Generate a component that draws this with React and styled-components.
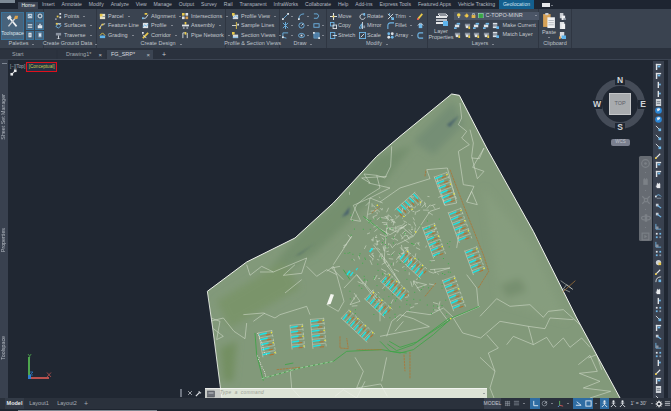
import React from 'react';
import styled, { createGlobalStyle } from 'styled-components';

const Global = createGlobalStyle`
  html, body { margin: 0; padding: 0; overflow: hidden; background: #202732; }
  body { font-family: "Liberation Sans", Arial, sans-serif; }
`;

const Shell = styled.div`
  width: 671px; height: 411px; display: flex; flex-direction: column; overflow: hidden;
  font-size: 5.5px; line-height: 1; color: #c6cad0; background: #202732;
`;

/* ---------- menu tabs ---------- */
const MenuBar = styled.div`
  height: 9px; flex: none; display: flex; align-items: stretch; background: #1e2531; position: relative; font-size: 5.1px;
`;
const AppCorner = styled.div`
  width: 15px; height: 3px; margin-right: 3px; flex: none; background: #7d8a96;
`;
const MenuTab = styled.div`
  padding: 0 3.45px; display: flex; align-items: center; white-space: nowrap;
  margin-top: ${p => (p.$active ? 2 : 0)}px;
  background: ${p => (p.$active ? '#3b4453' : p.$hl ? '#135f8e' : 'transparent')};
  color: ${p => (p.$active ? '#eef0f2' : p.$hl ? '#cfe4f2' : '#b4bac2')};
  margin-left: ${p => p.$ml || 0}px;
`;
const WindowChip = styled.div`
  width: 8px; height: 4px; margin: 3px 1px 0 8px; background: #e6e8ea; flex: none;
`;
const MenuCaret = styled.span`
  width: 0; height: 0; margin-top: 4.5px; border-left: 1.2px solid transparent; border-right: 1.2px solid transparent; border-top: 1.5px solid #c6cad0;
`;

/* ---------- ribbon ---------- */
const Ribbon = styled.div`
  height: 39px; flex: none; display: flex; background: #3a4350;
`;
const Panel = styled.div`
  width: ${p => p.$w}px; flex: none; display: flex; flex-direction: column;
  border-right: 1px solid #2f3642; box-sizing: border-box;
`;
const PanelBody = styled.div`
  height: 31px; display: flex; padding: 2.5px 0 0 ${p => p.$pl || 0}px; box-sizing: border-box;
`;
const PanelTitle = styled.div`
  height: 8px; display: flex; align-items: center; justify-content: center; gap: 3px;
  color: #bcc1c8; white-space: nowrap;
`;
const ToolColumn = styled.div`
  width: ${p => p.$w}px; flex: none; display: flex; flex-direction: column;
`;
const ToolItem = styled.div`
  height: 9.5px; display: flex; align-items: center; gap: ${p => p.$gap ?? 2}px; white-space: nowrap; color: #c4c8ce;
`;
const Caret = styled.span`
  width: 0; height: 0; flex: none; margin-left: ${p => p.$ml ?? 2}px;
  border-left: 1.2px solid transparent; border-right: 1.2px solid transparent; border-top: 1.5px solid #c6cad0;
`;
const IconSvg = styled.svg`
  width: ${p => p.$s || 7}px; height: ${p => p.$s || 7}px; flex: none; display: block;
`;
const ToolspaceBlock = styled.div`
  display: flex; gap: 1px; padding: 0 0 0 1px;
`;
const ToolspaceButton = styled.div`
  width: 23px; height: 28px; box-sizing: border-box; border: 1px solid #3a7299; background: #47637c;
  display: flex; flex-direction: column; align-items: center; justify-content: flex-start; padding-top: 2px; gap: 3px;
  color: #dde4ea; font-size: 5px;
`;
const PaletteGrid = styled.div`
  display: grid; grid-template-columns: 8px 9px; grid-template-rows: repeat(3, 9px); gap: .5px 1px; margin-left: 1px;
`;
const PaletteButton = styled.div`
  background: #47637c; border: .5px solid #3a7299; display: flex; align-items: center; justify-content: center;
`;
const BigTool = styled.div`
  width: ${p => p.$w}px; flex: none; display: flex; flex-direction: column; align-items: center; gap: 1.5px;
  line-height: 6px; text-align: center; color: #c4c8ce; padding-top: 1px;
`;
const DrawGrid = styled.div`
  display: grid; grid-template-columns: 15.5px 15.5px 15px; grid-auto-rows: 9.5px;
`;
const DrawCell = styled.div`
  display: flex; align-items: center; padding-left: 2px;
`;
const LayerStack = styled.div`
  width: 85px; flex: none; display: flex; flex-direction: column;
`;
const LayerCombo = styled.div`
  height: 8px; box-sizing: border-box; display: flex; align-items: center; gap: 2px; padding: 0 2px; margin-bottom: 1px;
  background: #4b5566; color: #d5d8dc;
`;
const ComboCaret = styled(Caret)`
  margin-left: auto;
`;
const LayerRow = styled.div`
  height: 9.5px; display: flex; align-items: center; gap: 2.5px; color: #c4c8ce; white-space: nowrap;
`;
const LayerLabel = styled.span`
  margin-left: 1px;
`;

/* ---------- file tabs ---------- */
const TabStrip = styled.div`
  height: 12px; flex: none; box-sizing: border-box; padding-top: 2px; display: flex; gap: 2px; align-items: stretch;
  background: #2a313d; border-bottom: 1px solid #3c4452;
`;
const FileTab = styled.div`
  width: ${p => p.$w}px; box-sizing: border-box; padding: 0 3px 0 ${p => p.$pl}px; display: flex; align-items: center;
  justify-content: space-between; color: ${p => (p.$active ? '#d8dbdf' : '#a2a8b0')};
  background: ${p => (p.$active ? '#3b4452' : '#2c333f')};
`;
const TabClose = styled.span`
  color: #c0c4ca; font-size: 6px;
`;
const TabPlus = styled.div`
  width: 10px; margin-left: 4px; display: flex; align-items: center; justify-content: center; color: #c8ccd2; font-size: 7px;
`;

/* ---------- workspace ---------- */
const Workspace = styled.div`
  height: 338px; flex: none; display: flex;
`;
const LeftStrip = styled.div`
  width: 8px; flex: none; background: #39414f; position: relative; display: flex; flex-direction: column; align-items: center;
`;
const StripGrip = styled.div`
  width: 5px; height: 1px; background: #7f8794; margin: 3px 0 ${p => p.$after}px;
`;
const StripLabel = styled.div`
  writing-mode: vertical-rl; transform: rotate(180deg); white-space: nowrap; color: #b3b9c1; font-size: 5.3px;
  margin-bottom: ${p => p.$after}px;
`;
const Canvas = styled.div`
  width: 645px; flex: none; position: relative; background: #202732;
`;
const Drawing = styled.svg`
  position: absolute; inset: 0; width: 645px; height: 338px; display: block;
`;
const ViewportLabel = styled.div`
  position: absolute; left: 2px; top: 2px; display: flex; align-items: center; gap: 1px; color: #aeb4bb; font-size: 4.6px;
`;
const VisualStyle = styled.span`
  border: 1px solid #e0101c; padding: 1.5px 1.5px; color: #c9c94a; background: #243246; width: 26px; box-sizing: content-box; white-space: nowrap;
`;
const ExpandIcon = styled.div`
  position: absolute; left: 2px; top: 9px;
`;
const Compass = styled.div`
  position: absolute; left: 579px; top: 16px; width: 66px; height: 56px;
`;
const CompassRing = styled.div`
  position: absolute; left: 8px; top: 3px; width: 50px; height: 50px; box-sizing: border-box;
  border: 7px solid #454c58; border-radius: 50%;
`;
const CubeFace = styled.div`
  position: absolute; left: 22px; top: 17px; width: 22px; height: 22px; box-sizing: border-box;
  background: #a8abae; border: 1.5px solid #c4c6c8; color: #5c6068; font-size: 5.5px;
  display: flex; align-items: center; justify-content: center;
`;
const CompassLetter = styled.span`
  position: absolute; left: ${p => p.$x}px; top: ${p => p.$y}px; width: 10px; text-align: center;
  color: #d0d3d6; font-size: 8.5px; font-weight: 700; background: #202732; line-height: 9px;
`;
const WcsChip = styled.div`
  position: absolute; left: 603px; top: 79px; width: 19px; height: 7px; border-radius: 2px; background: #7a7f8e;
  color: #bfc3cc; font-size: 4.5px; display: flex; align-items: center; justify-content: center;
`;
const NavBar = styled.div`
  position: absolute; left: 631px; top: 96px; width: 13px; height: 85px; border-radius: 1.5px; background: #666b72;
  display: flex; flex-direction: column; align-items: center; padding-top: 3px; box-sizing: border-box; gap: 3px;
`;
const NavDivider = styled.div`
  width: 1.5px; height: 1.5px; background: #7a7f86; margin: 1px 0;
`;
const CommandWrap = styled.div`
  position: absolute; left: 172px; bottom: 0; display: flex; align-items: center; height: 10px;
`;
const CommandGrip = styled.div`
  width: 2px; height: 8px; background: #6d7480; margin-right: 3px;
`;
const CommandTool = styled.div`
  width: ${p => p.$w}px; display: flex; align-items: center; justify-content: center; color: #c8ccd2;
`;
const CommandBox = styled.div`
  width: 282px; height: 10px; margin-left: 2px; box-sizing: border-box; display: flex; align-items: center; gap: 1px; padding: 0 2px;
  background: rgba(243, 245, 238, .8); border-top: 1px solid rgba(255,255,255,.6);
`;
const CommandPrompt = styled.span`
  font-style: italic; font-size: 4.8px; color: #9aa094; letter-spacing: .3px; word-spacing: 1.5px; margin-left: 1px;
`;
const CommandEnd = styled(Caret)`
  margin-left: auto; transform: rotate(180deg); border-top-color: #59606a;
`;
const RightDock = styled.div`
  width: 18px; flex: none; display: flex; background: #202732;
`;
const DockBar = styled.div`
  width: 11px; margin-top: 1px; background: #39414f; display: flex; flex-direction: column; align-items: center; padding-top: 1px;
`;
const DockGap = styled.div`
  width: 4px;
`;
const DockEdge = styled.div`
  width: 3px; background: #343c4a;
`;
const DockSep = styled.div`
  width: 8px; height: 1px; background: #8a919c; margin: 1.5px 0;
`;
const DockSlot = styled.div`
  height: 8.9px; flex: none; display: flex; align-items: center; justify-content: center;
`;

/* ---------- status ---------- */
const StatusBar = styled.div`
  height: 11px; flex: none; display: flex; background: #2a313c; align-items: stretch;
`;
const LayoutTabs = styled.div`
  display: flex; padding-left: 5px; gap: 2px;
`;
const LayoutTab = styled.div`
  width: ${p => p.$w}px; display: flex; align-items: center; justify-content: center;
  color: ${p => (p.$active ? '#e6e8ea' : '#a8aeb6')}; font-weight: ${p => (p.$active ? 700 : 400)};
  background: ${p => (p.$active ? '#333b47' : 'transparent')}; font-size: ${p => p.$fs || 5.5}px;
`;
const StatusTools = styled.div`
  margin-left: auto; display: flex; align-items: stretch;
`;
const StatusCell = styled.div`
  width: ${p => p.$w}px; flex: none; display: flex; align-items: center; justify-content: center;
  background: ${p => (p.$on ? '#2f6da3' : p.$chip ? '#3a4250' : 'transparent')};
  color: #c2c7ce; font-size: 5px; white-space: nowrap;
`;
const ScrollBand = styled.div`
  height: 2px; flex: 1; background: #1e2530; padding-left: 18px;
`;
const ScrollThumb = styled.div`
  width: 139px; height: 1.5px; margin-top: 1px; background: #7f8690;
`;

/* ---------- icons ---------- */
const W = '#dfe3e7', Y = '#e8c84a', B = '#5fb4ec', C = '#6fb7e8', O = '#d39a4a', D = '#8a93a0';
const line = (d, c = W, w = 1) => <path d={d} fill="none" stroke={c} strokeWidth={w} />;
const rect = (x, y, w, h, c = W) => <rect x={x} y={y} width={w} height={h} fill={c} />;

const shapes = {
  points: <>{rect(5, 0, 2, 2, W)}{rect(2, 3, 2, 2, Y)}{rect(5, 4, 2, 2, W)}{rect(0, 6, 2, 2, D)}</>,
  surface: <>{line('M1 5 L4 2 L7 4 L4 7 Z', C)}{line('M1 2 L7 2', W)}{rect(1, 1, 2, 2, Y)}</>,
  traverse: <>{rect(1, 1, 6, 3, D)}{line('M4 4 V8 M2 8 H6', W)}</>,
  parcel: <>{rect(1, 1, 6, 6, '#e6e2c8')}{rect(1, 1, 3, 3, Y)}{line('M4 4 H7', D)}</>,
  feature: <>{line('M1 7 L3 3 L7 2', W)}{rect(0, 6, 2, 2, Y)}{rect(3, 2, 2, 2, Y)}</>,
  grading: <>{rect(1, 4, 6, 3, B)}{line('M1 4 L4 1 L7 4', Y)}</>,
  align: <>{line('M0 6 H4 L7 2', W)}{rect(3, 0, 3, 2, Y)}{rect(0, 5, 2, 2, C)}</>,
  profile: <>{rect(1, 1, 6, 6, '#dfe3e7')}{line('M1 6 L3 3 L5 5 L7 2', C)}</>,
  corridor: <>{line('M1 7 L7 1', Y, 2)}{line('M1 3 L5 7', W)}{rect(0, 0, 2, 2, W)}</>,
  inter: <>{rect(0, 0, 3, 3, Y)}{rect(4, 0, 3, 3, W)}{rect(0, 4, 3, 3, W)}{rect(4, 4, 3, 3, O)}</>,
  assembly: <>{rect(3, 0, 2, 3, Y)}{rect(0, 3, 8, 2, W)}{rect(1, 5, 2, 3, D)}{rect(5, 5, 2, 3, D)}</>,
  pipe: <>{line('M1 1 V7 M1 1 H4 M6 1 V7', W)}{rect(3, 0, 2, 3, Y)}</>,
  pview: <>{rect(1, 2, 6, 5, '#d7dade')}{line('M1 6 L4 3 L7 5', C)}{rect(0, 0, 3, 3, Y)}</>,
  sample: <>{line('M0 4 H5', W)}{line('M5 0 V8', Y)}{rect(6, 2, 2, 2, W)}</>,
  section: <>{rect(1, 3, 6, 4, '#d7dade')}{rect(0, 0, 3, 3, Y)}{line('M1 6 H7', C)}</>,
  dline: <>{line('M1 7 L7 1', C)}{rect(0, 6, 2, 2, W)}{rect(6, 0, 2, 2, W)}</>,
  darc: <>{line('M1 7 Q1 1 7 1', C)}{rect(0, 6, 2, 2, W)}</>,
  dcurve: <>{line('M1 1 H5 Q8 3 5 6 H1', C)}</>,
  dstar: <>{line('M1 1 L7 7 M7 1 L1 7 M4 0 V8', C)}</>,
  dcircle: <><circle cx="4" cy="4" r="3" fill="none" stroke={C} strokeWidth="1" />{line('M4 4 L6 2', W)}</>,
  drect: <rect x="1" y="2" width="6" height="4" fill="none" stroke={C} strokeWidth="1" />,
  dpoly: <>{line('M1 1 H7 M1 1 V6 L5 7', C)}{rect(0, 5, 2, 2, W)}</>,
  dgear: <><ellipse cx="4" cy="4" rx="3.4" ry="2.4" fill="none" stroke={C} strokeWidth="1" />{rect(3, 3, 2, 2, W)}</>,
  dhatch: <><rect x="1" y="1" width="6" height="6" fill="#4f7ea6" stroke={C} strokeWidth=".6" />{rect(0, 0, 2, 2, W)}{rect(6, 6, 2, 2, W)}</>,
  move: <>{line('M4 0 V8 M0 4 H8', W, 1.2)}{rect(3, 3, 2, 2, Y)}</>,
  copy: <><rect x="0.5" y="0.5" width="4" height="4" fill="none" stroke={C} strokeWidth="1" /><rect x="3.5" y="3.5" width="4" height="4" fill="none" stroke={W} strokeWidth="1" /></>,
  stretch: <><rect x="0.5" y="0.5" width="5" height="7" fill="none" stroke={C} strokeWidth="1" />{line('M3 4 H8', W)}</>,
  rotate: <>{line('M6.5 2.5 A3 3 0 1 0 7 5', W)}{rect(5, 0, 2, 3, C)}</>,
  mirror: <>{line('M4 0 V8', W)}{line('M0 7 L3 2 V7 Z', C)}{rect(5, 4, 2, 3, D)}</>,
  scale: <><rect x="0.5" y="0.5" width="7" height="7" fill="none" stroke={C} strokeWidth="1" />{line('M2 6 L6 2', W)}</>,
  trim: <>{line('M1 1 L7 7 M7 1 L1 7', W)}{line('M3 0 V3', C)}{rect(5, 5, 3, 3, C)}</>,
  fillet: line('M1 8 V4 Q1 1 4 1 H8', C, 1.2),
  array: <><circle cx="2" cy="2" r="1.6" fill={C} /><circle cx="6" cy="2" r="1.6" fill={W} /><circle cx="2" cy="6" r="1.6" fill={W} /><circle cx="6" cy="6" r="1.6" fill={C} /></>,
  erase: <>{line('M1 7 L6 1', Y, 2)}{rect(0, 6, 2, 2, '#e25555')}</>,
  explode: <>{rect(2, 2, 4, 5, C)}{line('M1 4 L4 1 L7 4', W)}</>,
  offset: line('M7 1 H3 Q1 1 1 4 Q1 7 3 7 H7', C, 1.3),
  bulbOn: <><circle cx="4" cy="3" r="2.6" fill="#f0d24e" />{rect(3, 5, 2, 3, '#c9cbc5')}</>,
  sun: <><circle cx="4" cy="4" r="2.5" fill="#f0c84a" />{line('M4 0 V1 M4 7 V8 M0 4 H1 M7 4 H8', '#f0c84a')}</>,
  lock: <>{rect(1, 3, 6, 5, '#e0b44c')}{line('M2.5 3 V1 H5.5 V3', W)}</>,
  swatch: <rect x="0.5" y="0.5" width="7" height="7" fill="#3aa646" stroke="#cfe" strokeWidth=".6" />,
  layA: <>{rect(1, 3, 5, 3, W)}{rect(3, 1, 4, 2, C)}{rect(0, 6, 3, 2, C)}</>,
  layB: <>{rect(1, 2, 6, 3, D)}{rect(2, 4, 3, 3, W)}{rect(5, 5, 2, 3, Y)}</>,
  big: <>{rect(1, 1, 5, 2, W)}{rect(1, 3, 5, 2, D)}{rect(1, 5, 5, 2, W)}{rect(5, 5, 3, 3, B)}</>,
  layerBig: <>{line('M4 1 L12 1 L14 3 L6 3 Z', W)}{rect(2, 3, 11, 2, '#e4e6e8')}{rect(2, 6, 11, 2, '#b8bdc4')}{rect(2, 9, 11, 2, '#e4e6e8')}{rect(9, 8, 5, 5, B)}</>,
  paste: <>{rect(0, 1, 7, 12, '#d6a258')}{rect(2, 0, 3, 2, '#c9cdd2')}{rect(4, 4, 7, 10, '#eff1f3')}{line('M5 7 H10 M5 9 H10 M5 11 H10', '#9aa0a8', .6)}</>,
  cut: <>{rect(1, 0, 4, 6, '#c9cdd2')}{rect(3, 3, 4, 5, '#eef0f2')}{rect(5, 6, 3, 2, D)}</>,
  pasteS: <>{rect(1, 0, 5, 8, '#dfe2e5')}{rect(3, 2, 4, 6, '#f2f3f4')}</>,
  matchP: <>{rect(1, 0, 5, 7, '#d9dce0')}{rect(3, 4, 5, 4, B)}{rect(0, 5, 2, 3, O)}</>,
  pal1: <>{rect(1, 1, 6, 6, '#bed0de')}{line('M2 5 L4 3 L6 4', '#3c6f9a')}</>,
  pal2: <circle cx="4" cy="4" r="2.6" fill="none" stroke="#dfe8ef" strokeWidth="1.3" />,
  pal3: line('M1 2 H7 M1 4 H7 M1 6 H7', '#dfe8ef'),
  pal4: <>{rect(1, 3, 6, 4, '#dfe8ef')}{rect(3, 1, 2, 2, '#dfe8ef')}</>,
  pal5: <>{rect(2, 1, 4, 6, '#eef2f5')}{line('M3 3 H5 M3 5 H5', '#5a7a95')}</>,
  pal6: <>{rect(2, 1, 4, 6, '#a7c4dc')}{rect(3, 3, 2, 2, '#fff')}</>,
  dockFlag: <>{rect(1, 1, 6, 1.6, W)}{rect(1, 1, 1.6, 7, W)}{rect(3, 3, 3, 2, C)}</>,
  dockThin: <>{rect(3, 1, 1.6, 7, W)}{rect(4.6, 3, 2, 2, C)}</>,
  dockDoc: <>{rect(1, 0, 6, 8, '#cdd2d8')}{line('M2 3 H6 M2 5 H6', '#6f7884')}</>,
  globe: <><circle cx="4" cy="4" r="3.8" fill="#2a86d6" /><path d="M2 2 L5 1 L6 3 L3 5 Z" fill="#e8eef4" /></>,
  dockArrow: <>{line('M1 1 L6 6', W)}{rect(4, 4, 3, 3, C)}</>,
  dockHand: <>{rect(2, 2, 4, 5, '#e9ebee')}{line('M3 1 V3 M5 1 V3', W)}{rect(1, 4, 1, 2, W)}</>,
  dockUndo: <>{line('M1 4 Q4 0 7 4', C)}{line('M2 6 H7', D)}{rect(0, 3, 2, 2, W)}</>,
  dockBlue: <>{rect(1, 2, 3, 3, '#c6ccd4')}{line('M3 4 L7 7', C, 1.4)}</>,
  dockAxis: <>{line('M1 1 V7 H7', C)}{rect(1, 4, 3, 3, D)}</>,
  dockDots: <>{rect(1, 1, 2, 2, W)}{rect(5, 1, 2, 2, C)}{rect(1, 5, 2, 2, C)}{rect(5, 5, 2, 2, D)}</>,
  dockBall: <><circle cx="4" cy="4" r="3" fill="#cfd3d8" />{rect(4, 4, 3, 3, Y)}</>,
  dockPen: <>{line('M1 7 L6 2', W, 1.3)}{rect(0, 6, 2, 2, Y)}</>,
  dockCurve: <>{line('M1 7 Q1 1 7 1', W)}{rect(4, 4, 3, 3, C)}</>,
  wrench: <>{line('M1 7 L5 3', W, 1.4)}{line('M5 3 L4.5 1.2 M5 3 L7 3.5', W, 1.2)}</>,
  close: line('M1.5 1.5 L6.5 6.5 M6.5 1.5 L1.5 6.5', '#c8ccd2', 1),
  grid: line('M1 2 H7 M1 4 H7 M1 6 H7 M2 1 V7 M4 1 V7 M6 1 V7', '#8a929d', .7),
  snap: line('M1 1.5 H7 M1 3.5 H7 M1 5.5 H7', '#8a929d', .8),
  ortho: line('M2 1 V6.5 H7', '#e6f0f8', 1),
  polar: <><circle cx="4" cy="4" r="2.7" fill="none" stroke="#8a929d" strokeWidth=".9" />{line('M4 4 L7 2', '#bcc2ca')}</>,
  xyz: <>{line('M3 1 V6', '#5cba5e')}{line('M3 6 L7 7', '#d85a5a')}{line('M3 6 L1 8', '#5aa0e0')}</>,
  dyn: line('M1 6 H7 L2 2', '#e6f0f8'),
  win: <rect x="1" y="1" width="6" height="6" fill="none" stroke="#e6f0f8" strokeWidth="1" />,
  man: <><circle cx="4" cy="1.6" r="1.2" fill="#e4e8ec" />{line('M4 3 V5 L1 8 M4 5 L7 8 M2 3.5 H6', '#e4e8ec', 1)}</>,
  gear: <><circle cx="4" cy="4" r="2" fill="none" stroke="#e4e6e8" strokeWidth="1.3" />{line('M4 0.5 V2 M4 6 V7.5 M0.5 4 H2 M6 4 H7.5 M1.6 1.6 L2.6 2.6 M5.4 5.4 L6.4 6.4 M6.4 1.6 L5.4 2.6 M2.6 5.4 L1.6 6.4', '#e4e6e8', .9)}</>,
  menu: line('M1 2 H7 M1 4 H7 M1 6 H7', '#c8ccd2', .9),
  expand: <>{line('M2 6 L6 2', '#e8eaec', 1.2)}{rect(4.5, .5, 3, 3, '#e8eaec')}{rect(.5, 4.5, 3, 3, '#e8eaec')}</>,
  navWheel: <><circle cx="4" cy="4" r="3.4" fill="none" stroke="#7c8187" strokeWidth="1" /><circle cx="4" cy="4" r="1.2" fill="#7c8187" /></>,
  navHand: <>{rect(2, 2, 4, 5, '#7c8187')}{line('M3 1 V3 M5 1 V3', '#7c8187')}</>,
  navZoom: <>{line('M1 1 L7 7 M7 1 L1 7', '#7c8187', 1)}<circle cx="4" cy="4" r="1.4" fill="#666b72" stroke="#7c8187" /></>,
  navOrbit: <><ellipse cx="4" cy="4" rx="3.6" ry="1.6" fill="none" stroke="#7c8187" />{rect(3, 1, 2, 6, '#7c8187')}</>,
  navPlay: <><rect x="1" y="1" width="6" height="6" fill="none" stroke="#7c8187" /><path d="M3 2.5 L5.5 4 L3 5.5 Z" fill="#7c8187" /></>,
  cmd: <><rect x="0.5" y="1" width="7" height="6" fill="#6c7078" stroke="#454a52" strokeWidth=".5" />{line('M1.5 3 H6.5', '#d8dade', .8)}</>,
};

const Ic = ({ n, s }) => <IconSvg viewBox="0 0 8 8" $s={s}>{shapes[n]}</IconSvg>;
const IcWide = ({ n, w, h, vb }) => <svg width={w} height={h} viewBox={vb}>{shapes[n]}</svg>;

const Tool = ({ icon, label, caret, gap }) => (
  <ToolItem $gap={gap}>
    <Ic n={icon} />
    <span>{label}</span>
    {caret && <Caret />}
  </ToolItem>
);

const menu = ['Insert', 'Annotate', 'Modify', 'Analyze', 'View', 'Manage', 'Output', 'Survey', 'Rail', 'Transparent', 'InfraWorks', 'Collaborate', 'Help', 'Add-ins', 'Express Tools', 'Featured Apps', 'Vehicle Tracking'];

const draw = [
  ['dline', true], ['darc', true], ['dcurve', false],
  ['dstar', true], ['dcircle', true], ['drect', true],
  ['dpoly', true], ['dgear', true], ['dhatch', true],
];

const dock = [
  'dockFlag', 'dockFlag', 'dockThin', 'dockThin', 'dockDoc', 'globe', 'globe', 'dockArrow', 'dockArrow', 'dockArrow', 'dockPen', 'dockFlag', 'dockFlag',
  '|', 'dockHand', '|', 'dockUndo', 'dockBlue', 'dockBlue', '|', 'dockAxis', 'dockDots', 'dockAxis', 'dockDots', 'dockBall', 'dockPen', 'dockCurve',
  '|', 'dockHand', 'dockThin', 'dockDots', 'dockArrow', 'dockFlag', 'dockBlue', 'dockAxis', 'dockDots', 'dockThin', 'dockPen', 'dockFlag', 'dockDoc', 'dockArrow', 'dockBlue',
];

/* ---------- the site drawing, in coordinates of the 3x crop ---------- */
const boundary = '22,610 140,522 285,450 400,345 530,205 600,145 755,18 778,22 860,180 1000,430 1130,690 1260,930 1260,960 70,960 60,890 38,720';

const white = [
  '780,45 785,90 775,110 800,130 785,150 808,170 775,190 790,290 822,295 800,342 832,350 815,310 800,340',
  '810,125 820,165 815,205 832,272 852,250 818,238 852,180 838,212 815,210',
  '575,175 572,235 555,270 530,262 492,258 510,285 485,270 560,265',
  '530,262 540,300 500,325 470,350 452,395 482,400 460,352 510,330 500,395 535,420 570,440 620,410 590,432 560,420 552,520 600,585',
  '540,342 600,300 690,272 680,245 742,240 770,345 735,352 710,268',
  '505,285 570,300 510,330 548,345',
  '760,690 788,735 842,750 900,700 985,715 1035,722 1050,690 1120,695',
  '840,685 890,632 930,655 990,650 1030,688 1045,670 1090,665 1118,690 1142,712',
  '860,740 895,780 865,795 885,850 870,900 882,930',
  '840,808 885,850',
  '985,715 1000,770 940,745 920,770',
  '1000,770 1040,748 1060,778 1090,750 1110,778 1145,750 1170,778',
  '1135,830 1170,802 1192,850 1138,856 1200,880 1150,900 1232,910 1170,930',
  '1165,810 1190,800 1205,845',
  '540,745 688,716 640,692 600,680 575,700 560,745',
  '30,700 70,690 102,730 135,752 140,705',
  '40,722 70,745 50,755 60,700 32,690',
  '140,530 150,562 185,535 220,552 180,552',
  '220,552 320,510 305,556 250,562 285,530',
  '320,535 350,565 380,545 410,560 400,535 380,550',
  '255,615 305,575',
  '410,560 432,640 415,670 380,650',
  '400,530 455,445 430,480',
  '432,600 470,560 530,640',
  '270,840 275,900 300,928',
  '465,808 490,850 470,900 542,888 562,925',
  '560,808 545,880',
  '405,925 430,905 470,930 495,880',
  '590,700 620,670 690,680 730,660 760,688',
  '610,700 585,730',
  '720,640 715,660 745,700',
  '430,575 395,540 420,535',
  '470,620 450,650 480,640 462,615',
  '130,680 190,675 225,690 240,680 320,655 330,680',
  '160,700 195,675',
  '660,610 640,580 680,590 650,600',
  '690,545 750,540 700,555',
  '560,420 610,420 640,445 590,470',
  '640,445 690,370 720,360',
  '520,470 560,520 600,585',
  '470,560 540,640 540,700',
  '800,560 830,600 835,655',
  '760,690 840,655',
  '780,420 770,480',
];

const orange = [
  '750,245 790,350 850,500 866,550 835,600',
  '420,745 420,780 445,782 440,750',
  '612,800 615,850',
  '630,792 630,872',
  '545,785 470,785',
  '230,845 300,838',
  '675,625 708,585',
  '675,265 678,245',
  '515,375 540,355',
];

const green = [
  '185,872 300,840 400,820 440,790 545,785 600,795 640,785 700,740 755,690 838,655',
  '562,768 590,788 640,770 690,735 750,696',
  '568,760 600,778 650,762 748,690',
  '165,735 170,800 190,878',
  '255,830 280,825',
  '490,385 560,440',
  '430,545 450,575',
  '540,760 570,790 620,795',
];

const blocks = [
  [737, 302, 40, 92, -20], [780, 412, 40, 98, -20], [825, 518, 38, 78, -20], [762, 616, 38, 100, -20],
  [702, 458, 38, 100, -20], [626, 352, 34, 82, 49], [640, 528, 34, 92, -47], [585, 597, 34, 88, -47],
  [535, 648, 34, 84, -47], [474, 714, 34, 108, -47], [355, 736, 40, 90, -5], [292, 746, 38, 74, -5], [202, 767, 40, 76, -10],
];

const Block = ({ x, y, w, l, a }) => {
  const n = Math.round(l / 16);
  return (
    <g transform={`translate(${x} ${y}) rotate(${a})`}>
      <line x1={-w / 2} x2={-w / 2} y1={-l / 2} y2={l / 2} stroke="#dfe5d8" strokeWidth="1.3" />
      <line x1={w / 2} x2={w / 2} y1={-l / 2} y2={l / 2} stroke="#dfe5d8" strokeWidth="1.3" strokeDasharray="8 5" />
      {Array.from({ length: n }, (_, i) => {
        const yy = -l / 2 + ((i + 0.5) * l) / n;
        return (
          <g key={i}>
            <line x1={-w / 2} x2={w / 2} y1={yy - 6} y2={yy - 6} stroke="#dfe5d8" strokeWidth="1.1" />
            <line x1={-w * 0.48} x2={w * 0.1} y1={yy} y2={yy - 1.5} stroke="#1de4e6" strokeWidth="4.2" />
            <line x1={w * 0.02} x2={w * 0.34} y1={yy + 4} y2={yy + 4} stroke="#b4702c" strokeWidth="3" />
            {i % 2 === 0 && <rect x={w * 0.4} y={yy - 2} width="4" height="4" fill="#f2e83a" />}
          </g>
        );
      })}
    </g>
  );
};

/* pseudo-random site clutter, fixed by the seed */
const rng = (() => { let s = 7919; return () => (s = (s * 16807) % 2147483647) / 2147483647; })();
const clutter = Array.from({ length: 190 }, (_, i) => {
  const tight = i % 2 === 0;
  const cx = tight ? 510 + rng() * 140 : 440 + rng() * 280;
  const cy = tight ? 350 + rng() * 170 : 320 + rng() * 350;
  const a = rng() * 6.28, r = 5 + rng() * 13;
  return [cx, cy, cx + Math.cos(a) * r, cy + Math.sin(a) * r];
});
const greenDots = Array.from({ length: 130 }, () => [430 + rng() * 320, 380 + rng() * 320]);
const roadDots = Array.from({ length: 26 }, (_, i) => [170 + (i % 13) * 2 + rng() * 4, 735 + i * 5.2]);

const Site = () => (
  <Drawing viewBox="8 60 645 338">
    <defs>
      <clipPath id="landClip"><polygon points={boundary} /></clipPath>
      <filter id="soft" x="-30%" y="-30%" width="160%" height="160%"><feGaussianBlur stdDeviation="11" /></filter>
      <filter id="softer" x="-30%" y="-30%" width="160%" height="160%"><feGaussianBlur stdDeviation="3" /></filter>
    </defs>
    <g transform="translate(200 88) scale(.33333)">
      <polygon points={boundary} fill="#82997a" />
      <g clipPath="url(#landClip)">
        <g filter="url(#soft)">
          <polygon points="285,450 400,345 530,205 640,170 500,350 340,500 180,580" fill="#748f6e" />
          <polygon points="50,640 250,520 300,600 90,720" fill="#7a946a" />
          <polygon points="60,780 110,760 100,880 70,880" fill="#738f62" />
          <polygon points="640,160 760,40 790,110 700,200" fill="#748e74" />
          <polygon points="850,300 1000,480 1100,700 900,640" fill="#869d7e" />
          <polygon points="900,590 960,570 980,610 920,630" fill="#778f6f" />
        </g>
        <g filter="url(#softer)">
          <polygon points="425,388 450,355 445,378" fill="#46606c" />
          <polygon points="740,110 778,82 750,118" fill="#50696c" />
          <polygon points="285,505 345,465 300,500" fill="#5a7468" />
        </g>
        <g fill="none" stroke="#dfe6d8" strokeWidth="1.7" opacity=".88">
          {white.map((p, i) => <polyline key={i} points={p} />)}
          {clutter.map((c, i) => <line key={i} x1={c[0]} y1={c[1]} x2={c[2]} y2={c[3]} />)}
        </g>
        <polygon points="380,650 392,618 402,620 392,648" fill="#f4f6f0" />
        <g fill="none" stroke="#3fa548" strokeWidth="2.6">
          {green.map((p, i) => <polyline key={i} points={p} />)}
        </g>
        <g fill="none" stroke="#b4702c" strokeWidth="2.2" strokeDasharray="7 2">
          {orange.map((p, i) => <polyline key={i} points={p} />)}
        </g>
        <polyline points="185,872 300,840 400,820" fill="none" stroke="#e3e8dc" strokeWidth="1.6" strokeDasharray="9 6" />
        {blocks.map((b, i) => <Block key={i} x={b[0]} y={b[1]} w={b[2]} l={b[3]} a={b[4]} />)}
        <g fill="#1de4e6">
          <rect x="438" y="552" width="16" height="5" transform="rotate(-55 446 555)" />
          <rect x="448" y="556" width="14" height="4" transform="rotate(-55 455 558)" />
          <rect x="506" y="484" width="14" height="5" transform="rotate(-50 513 486)" />
          <rect x="466" y="542" width="8" height="3" transform="rotate(-55 470 543)" />
        </g>
        <g fill="#3fae4a">{greenDots.map((d, i) => <rect key={i} x={d[0]} y={d[1]} width="3" height="3" />)}</g>
        <g fill="#e6ebdf">{roadDots.map((d, i) => <rect key={i} x={d[0]} y={d[1]} width="2.6" height="2.6" />)}</g>
        <g fill="#f2e83a">
          <rect x="750" y="690" width="4" height="4" /><rect x="645" y="430" width="4" height="4" /><rect x="530" y="350" width="4" height="4" />
        </g>
      </g>
      <polyline points={boundary.split(' ').slice(0, 12).join(' ')} fill="none" stroke="#f1f4ee" strokeWidth="3" />
      <polyline points="22,610 38,720 60,890 70,960" fill="none" stroke="#eef2ea" strokeWidth="2.6" />
      <g fill="none" stroke="#d9dfd2" strokeWidth="1.6">
        <polyline points="1082,578 1118,604 1100,590 1090,603 1110,612" />
      </g>
      <polyline points="1088,612 1126,578" fill="none" stroke="#b98138" strokeWidth="2" />
    </g>
    {/* UCS icon */}
    <g>
      <rect x="28" y="357" width="2" height="21" fill="#4ea64e" />
      <rect x="28" y="377" width="21" height="2" fill="#b9514e" />
      <rect x="28" y="375" width="3" height="4" fill="#2f7fd0" />
      <path d="M28 354 l1.6 2.2 l1.6 -2.2 M29.6 356.2 v2" fill="none" stroke="#4ea64e" strokeWidth=".8" />
      <path d="M47 372.5 l4 4.5 M51 372.5 l-4 4.5" fill="none" stroke="#b9514e" strokeWidth=".8" />
      <path d="M30 372 h3 l-3 3 h3" fill="none" stroke="#2f7fd0" strokeWidth=".7" />
    </g>
  </Drawing>
);

export default function App() {
  return (
    <Shell>
      <Global />
      <MenuBar>
        <AppCorner />
        <MenuTab $active>Home</MenuTab>
        {menu.map(m => <MenuTab key={m}>{m}</MenuTab>)}
        <MenuTab $hl $ml={1}>Geolocation</MenuTab>
        <WindowChip />
        <MenuCaret />
      </MenuBar>

      <Ribbon>
        <Panel $w={44}>
          <PanelBody>
            <ToolspaceBlock>
              <ToolspaceButton>
                <IconSvg viewBox="0 0 16 16" $s={13}>
                  <path d="M4 3 L13 14" stroke="#eef1f4" strokeWidth="2" fill="none" />
                  <path d="M12 3 L3 14" stroke="#c9ced4" strokeWidth="1.8" fill="none" />
                  <path d="M1 3 L5 0 L7 3 L3 6 Z" fill="#e8eaed" />
                  <path d="M15 1 L11 1 L10 5 L14 5 Z" fill="#dba24c" />
                </IconSvg>
                <span>Toolspace</span>
              </ToolspaceButton>
              <PaletteGrid>
                {['pal1', 'pal2', 'pal3', 'pal4', 'pal5', 'pal6'].map(p => <PaletteButton key={p}><Ic n={p} s={6} /></PaletteButton>)}
              </PaletteGrid>
            </ToolspaceBlock>
          </PanelBody>
          <PanelTitle>Palettes <Caret $ml={1} /></PanelTitle>
        </Panel>

        <Panel $w={53}>
          <PanelBody $pl={11}>
            <ToolColumn $w={40}>
              <Tool icon="points" label="Points" caret />
              <Tool icon="surface" label="Surfaces" caret />
              <Tool icon="traverse" label="Traverse" caret />
            </ToolColumn>
          </PanelBody>
          <PanelTitle>Create Ground Data <Caret $ml={0} /></PanelTitle>
        </Panel>

        <Panel $w={129}>
          <PanelBody $pl={2}>
            <ToolColumn $w={43}>
              <Tool icon="parcel" label="Parcel" caret />
              <Tool icon="feature" label="Feature Line" caret />
              <Tool icon="grading" label="Grading" caret />
            </ToolColumn>
            <ToolColumn $w={40}>
              <Tool icon="align" label="Alignment" caret />
              <Tool icon="profile" label="Profile" caret />
              <Tool icon="corridor" label="Corridor" caret />
            </ToolColumn>
            <ToolColumn $w={44}>
              <Tool icon="inter" label="Intersections" caret />
              <Tool icon="assembly" label="Assembly" caret />
              <Tool icon="pipe" label="Pipe Network" caret />
            </ToolColumn>
          </PanelBody>
          <PanelTitle>Create Design <Caret $ml={1} /></PanelTitle>
        </Panel>

        <Panel $w={54}>
          <PanelBody $pl={6}>
            <ToolColumn $w={48}>
              <Tool icon="pview" label="Profile View" caret />
              <Tool icon="sample" label="Sample Lines" />
              <Tool icon="section" label="Section Views" caret />
            </ToolColumn>
          </PanelBody>
          <PanelTitle>Profile &amp; Section Views</PanelTitle>
        </Panel>

        <Panel $w={47}>
          <PanelBody>
            <DrawGrid>
              {draw.map(([n, c]) => <DrawCell key={n}><Ic n={n} />{c && <Caret />}</DrawCell>)}
            </DrawGrid>
          </PanelBody>
          <PanelTitle>Draw <Caret $ml={1} /></PanelTitle>
        </Panel>

        <Panel $w={101}>
          <PanelBody $pl={3}>
            <ToolColumn $w={29}>
              <Tool icon="move" label="Move" gap={1} />
              <Tool icon="copy" label="Copy" gap={1} />
              <Tool icon="stretch" label="Stretch" gap={1} />
            </ToolColumn>
            <ToolColumn $w={28}>
              <Tool icon="rotate" label="Rotate" gap={1} />
              <Tool icon="mirror" label="Mirror" gap={1} />
              <Tool icon="scale" label="Scale" gap={1} />
            </ToolColumn>
            <ToolColumn $w={30}>
              <Tool icon="trim" label="Trim" caret gap={1} />
              <Tool icon="fillet" label="Fillet" caret gap={1} />
              <Tool icon="array" label="Array" caret gap={1} />
            </ToolColumn>
            <ToolColumn $w={9}>
              <ToolItem><Ic n="erase" /></ToolItem>
              <ToolItem><Ic n="explode" /></ToolItem>
              <ToolItem><Ic n="offset" /></ToolItem>
            </ToolColumn>
          </PanelBody>
          <PanelTitle>Modify <Caret $ml={1} /></PanelTitle>
        </Panel>

        <Panel $w={111}>
          <PanelBody>
            <BigTool $w={26}>
              <IcWide n="layerBig" w={15} h={14} vb="0 0 15 14" />
              <span>Layer<br />Properties</span>
            </BigTool>
            <LayerStack>
              <LayerCombo>
                <Ic n="bulbOn" s={5.5} /><Ic n="sun" s={5.5} /><Ic n="lock" s={5} /><Ic n="swatch" s={5.5} />
                <span>C-TOPO-MINR</span>
                <ComboCaret />
              </LayerCombo>
              <LayerRow>
                <Ic n="layA" /><Ic n="layB" /><Ic n="layA" /><Ic n="layA" /><Ic n="big" />
                <LayerLabel>Make Current</LayerLabel>
              </LayerRow>
              <LayerRow>
                <Ic n="layB" /><Ic n="layB" /><Ic n="layB" /><Ic n="layB" /><Ic n="big" />
                <LayerLabel>Match Layer</LayerLabel>
              </LayerRow>
            </LayerStack>
          </PanelBody>
          <PanelTitle>Layers <Caret $ml={1} /></PanelTitle>
        </Panel>

        <Panel $w={33}>
          <PanelBody>
            <BigTool $w={20}>
              <IcWide n="paste" w={12} h={15} vb="0 0 11 14" />
              <span>Paste</span>
              <Caret $ml={0} />
            </BigTool>
            <ToolColumn $w={10}>
              <ToolItem><Ic n="cut" /></ToolItem>
              <ToolItem><Ic n="pasteS" /></ToolItem>
              <ToolItem><Ic n="matchP" /></ToolItem>
            </ToolColumn>
          </PanelBody>
          <PanelTitle>Clipboard</PanelTitle>
        </Panel>
      </Ribbon>

      <TabStrip>
        <FileTab $w={56} $pl={12}><span>Start</span></FileTab>
        <FileTab $w={47} $pl={8}><span>Drawing1*</span><TabClose>×</TabClose></FileTab>
        <FileTab $w={46} $active $pl={4}><span>FG_SRP*</span><TabClose>×</TabClose></FileTab>
        <TabPlus>+</TabPlus>
      </TabStrip>

      <Workspace>
        <LeftStrip>
          <StripGrip $after={30} />
          <StripLabel $after={88}>Sheet Set Manager</StripLabel>
          <StripLabel $after={84}>Properties</StripLabel>
          <StripLabel $after={0}>Toolspace</StripLabel>
        </LeftStrip>

        <Canvas>
          <Site />
          <ViewportLabel>
            <span>[−][Top]</span>
            <VisualStyle>[Conceptual]</VisualStyle>
          </ViewportLabel>
          <ExpandIcon><Ic n="expand" s={7} /></ExpandIcon>
          <Compass>
            <CompassRing />
            <CubeFace>TOP</CubeFace>
            <CompassLetter $x={28} $y={0}>N</CompassLetter>
            <CompassLetter $x={28} $y={47}>S</CompassLetter>
            <CompassLetter $x={5} $y={24}>W</CompassLetter>
            <CompassLetter $x={51} $y={24}>E</CompassLetter>
          </Compass>
          <WcsChip>WCS</WcsChip>
          <NavBar>
            <Ic n="navWheel" s={9} />
            <NavDivider />
            <Ic n="navHand" s={9} />
            <NavDivider />
            <Ic n="navZoom" s={10} />
            <NavDivider />
            <Ic n="navOrbit" s={10} />
            <NavDivider />
            <Ic n="navPlay" s={9} />
          </NavBar>
          <CommandWrap>
            <CommandGrip />
            <CommandTool $w={9}><Ic n="close" s={6} /></CommandTool>
            <CommandTool $w={9}><Ic n="wrench" s={7} /></CommandTool>
            <CommandBox>
              <Ic n="cmd" s={8} />
              <Caret $ml={0} />
              <CommandPrompt>Type a command</CommandPrompt>
              <CommandEnd />
            </CommandBox>
          </CommandWrap>
        </Canvas>

        <RightDock>
          <DockBar>
            {dock.map((d, i) => (d === '|' ? <DockSep key={i} /> : <DockSlot key={i}><Ic n={d} s={7} /></DockSlot>))}
          </DockBar>
          <DockGap />
          <DockEdge />
        </RightDock>
      </Workspace>

      <StatusBar>
        <LayoutTabs>
          <LayoutTab $w={19} $active>Model</LayoutTab>
          <LayoutTab $w={26}>Layout1</LayoutTab>
          <LayoutTab $w={26}>Layout2</LayoutTab>
          <LayoutTab $w={8} $fs={7}>+</LayoutTab>
        </LayoutTabs>
        <StatusTools>
          <StatusCell $w={17} $chip>MODEL</StatusCell>
          <StatusCell $w={2} />
          <StatusCell $w={9}><Ic n="grid" /></StatusCell>
          <StatusCell $w={9}><Ic n="snap" /></StatusCell>
          <StatusCell $w={6}><Caret $ml={0} /></StatusCell>
          <StatusCell $w={3} />
          <StatusCell $w={10} $on><Ic n="ortho" /></StatusCell>
          <StatusCell $w={9}><Ic n="polar" /></StatusCell>
          <StatusCell $w={6}><Caret $ml={0} /></StatusCell>
          <StatusCell $w={10}><Ic n="xyz" /></StatusCell>
          <StatusCell $w={5}><Caret $ml={0} /></StatusCell>
          <StatusCell $w={3} />
          <StatusCell $w={10} $on><Ic n="dyn" /></StatusCell>
          <StatusCell $w={10} $on><Ic n="win" /></StatusCell>
          <StatusCell $w={5}><Caret $ml={0} /></StatusCell>
          <StatusCell $w={2} />
          <StatusCell $w={9} $on><Ic n="man" /></StatusCell>
          <StatusCell $w={9}><Ic n="man" /></StatusCell>
          <StatusCell $w={9}><Ic n="man" /></StatusCell>
          <StatusCell $w={23}>1' = 30'</StatusCell>
          <StatusCell $w={4}><Caret $ml={0} /></StatusCell>
          <StatusCell $w={9}><Ic n="gear" s={8} /></StatusCell>
          <StatusCell $w={8}><Ic n="menu" s={7} /></StatusCell>
        </StatusTools>
      </StatusBar>
      <ScrollBand><ScrollThumb /></ScrollBand>
    </Shell>
  );
}
